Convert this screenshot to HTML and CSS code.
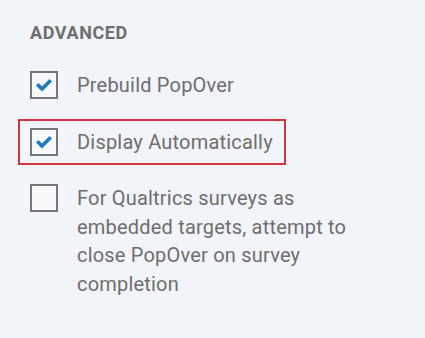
FILE: index.html
```html
<!DOCTYPE html>
<html>
<head>
<meta charset="utf-8">
<link rel="stylesheet" href="styles.css">
</head>
<body>
<div class="panel">
  <div class="heading">ADVANCED</div>
  <div class="options">
    <div class="option">
      <span class="box checked"><svg viewBox="0 0 24 24" width="24" height="24"><path d="M6.5 12.5 L10 16 L17.5 8.5" fill="none" stroke="#1b7ac6" stroke-width="3.6" stroke-linecap="square"/></svg></span>
      <span class="label">Prebuild PopOver</span>
    </div>
    <div class="option highlight">
      <span class="box checked"><svg viewBox="0 0 24 24" width="24" height="24"><path d="M6.5 12.5 L10 16 L17.5 8.5" fill="none" stroke="#1b7ac6" stroke-width="3.6" stroke-linecap="square"/></svg></span>
      <span class="label">Display Automatically</span>
    </div>
    <div class="option">
      <span class="box"></span>
      <span class="label wrap">For Qualtrics surveys as embedded targets, attempt to close PopOver on survey completion</span>
    </div>
  </div>
</div>
</body>
</html>
```
FILE: styles.css
```css
html, body {
  margin: 0;
  padding: 0;
  background: #f1f4f8;
}
body {
  width: 425px;
  height: 338px;
  overflow: hidden;
  font-family: Roboto, "Liberation Sans", sans-serif;
  color: #6e6e6e;
}
.panel {
  padding: 22px 0 0 18px;
}
.heading {
  padding-left: 12px;
  font-size: 18px;
  line-height: 21px;
  font-weight: 700;
  color: #6f6f6f;
  letter-spacing: 0.6px;
}
.options {
  display: flex;
  flex-direction: column;
  align-items: flex-start;
  gap: 10px;
  margin-top: 19px;
}
.option {
  display: flex;
  align-items: flex-start;
  gap: 19px;
  padding: 7px 11px 7px 10px;
  border: 2px solid transparent;
}
.option.highlight {
  border-color: #d2353a;
}
.box {
  flex: none;
  box-sizing: border-box;
  width: 28px;
  height: 28px;
  border: 2px solid #767676;
  background: #f7f8fa;
  display: flex;
  align-items: center;
  justify-content: center;
}
.box svg {
  display: block;
}
.label {
  font-size: 20px;
  line-height: 28.5px;
  white-space: nowrap;
  letter-spacing: 0.2px;
}
.label.wrap {
  white-space: normal;
  width: 290px;
}
```
